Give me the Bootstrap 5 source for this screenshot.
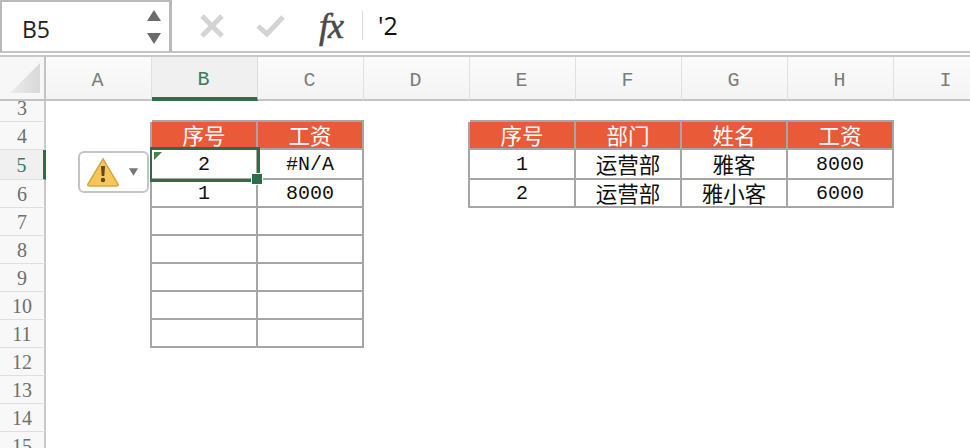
<!DOCTYPE html>
<html lang="zh">
<head>
    <meta charset="UTF-8">
    <title>工资表</title>
    <link href="https://cdn.jsdelivr.net/npm/bootstrap@5.3.0/dist/css/bootstrap.min.css" rel="stylesheet">
    <style>
        html, body { height: 448px; overflow: hidden; background: #fff; }
        .formula-bar { height: 57px; border-bottom: 2px solid #c8c8c8; }
        .formula-inner { height: 53px; border-bottom: 2px solid #c4c4c4; }
        .name-box {
            width: 172px; height: 52px; padding: 6px 0 0 20px;
            border: solid #b9b9b9; border-width: 2px 3px 2px 2px; border-bottom: 0;
            font: 23px/42px "Open Sans", "Liberation Sans", sans-serif; color: #222;
        }
        .name-arrows { width: 14px; margin-right: 8px; margin-top: 2px; gap: 11px; }
        .ico-x { margin-left: 27px; }
        .ico-ok { margin-left: 31px; }
        .fx-text { margin-left: 33px; font: italic 400 36px/1 "Liberation Serif", serif; -webkit-text-stroke: .6px #4a4a4a; color: #4a4a4a; width: 31px; letter-spacing: -1px; }
        .fx-sep { width: 1px; height: 29px; background: #ddd; margin: 0 15px 0 12px; }
        .fx-value { font: 25px/1 "Open Sans", "Liberation Sans", sans-serif; color: #111; }

        .sheet-wrap { position: relative; overflow: hidden; height: 391px; }
        .sheet { table-layout: fixed; border-collapse: separate; border-spacing: 0; width: 1000px; }
        .sheet th, .sheet td { padding: 0; text-align: center; vertical-align: middle; font-weight: 400; white-space: nowrap; }
        .sheet th { overflow: hidden; }
        .sheet .col-hd {
            height: 44px; border-bottom: 2px solid #c3c3c3; border-right: 1px solid #e0e0e0;
            background: linear-gradient(#fbfbfb, #f4f4f4);
            font: 20px "Liberation Mono", serif; color: #7c7c7c;
            padding: 4px 2px 0 0;
        }
        .sheet .col-hd.on { background: #f0f0f0; color: #3d7a58; border-bottom: 4px solid #2f6c4a; border-right-color: #dcdcdc; }
        .corner { background: #f7f7f7; border-right: 2px solid #c3c3c3; border-bottom: 2px solid #c3c3c3; }
        .sheet .row-hd {
            width: 46px; border-right: 2px solid #c9c9c9; border-bottom: 1px solid #dfdfdf;
            background: #f8f8f8; font: 20px/24px "Liberation Serif", serif; color: #6f6f6f;
        }
        .sheet .row-hd.on { background: #f0f0f0; color: #3d7a58; border-right: 3px solid #2f6c4a; }
        .r3 td, .r3 th { height: 21px; }
        .r3 .row-hd.row-hd { line-height: 14px; }
        .r3-num { display: block; height: 20px; line-height: 14px; overflow: hidden; }
        .rw td, .rw th { height: 28px; line-height: 24px; }
        .rw.r5 td, .rw.r5 th { height: 30px; }
        .xl { border-right: 2px solid #a6a6a6; border-bottom: 2px solid #a6a6a6; font: 20px "Liberation Mono", "Noto Sans CJK SC", monospace; color: #111; }
        .sheet td.xl { padding-top: 2px; }
        .sheet td.xl.cjk { padding-top: 0; }
        .sheet td.xl.hdr { background: #e95a39; color: #fff; padding-top: 0; }
        .edge-r { border-right: 2px solid #a6a6a6; }
        .edge-b { border-bottom: 2px solid #a6a6a6; }
        .cjk { font-family: "Noto Sans CJK SC", sans-serif; font-size: 21.5px; }

        .sel-box { position: absolute; left: 150px; top: 90px; width: 110px; height: 35px; border: 3px solid #2f6c4a; border-left-width: 2px; }
        .sel-handle { position: absolute; left: 251px; top: 116px; width: 12px; height: 12px; background: #2f6c4a; border: 1px solid #fff; }
        .err-mark { position: absolute; left: 154px; top: 95px; width: 0; height: 0; border-top: 8px solid #3f8a3f; border-right: 8px solid transparent; }
        .warn-btn {
            position: absolute; left: 78px; top: 94px; width: 71px; height: 42px; padding: 0 0 0 6px;
            background: #fff; border: 2px solid #c4c4c4; border-radius: 6px;
        }
    </style>
</head>
<body>

<!-- formula bar -->
<div class="formula-bar">
    <div class="formula-inner d-flex align-items-center">
        <div class="name-box d-flex justify-content-between">
            <span>B5</span>
            <div class="name-arrows d-flex flex-column">
                <svg width="14" height="12" viewBox="0 0 14 12"><path d="M7 0 14 11H0z" fill="#6b6b6b"/></svg>
                <svg width="14" height="12" viewBox="0 0 14 12"><path d="M0 0H14L7 11z" fill="#6b6b6b"/></svg>
            </div>
        </div>
        <div class="d-flex align-items-center">
            <svg class="ico-x" width="26" height="26" viewBox="0 0 26 26"><path d="M3 3 23 23M23 3 3 23" stroke="#d4d4d4" stroke-width="5" fill="none"/></svg>
            <svg class="ico-ok" width="30" height="24" viewBox="0 0 30 24"><path d="M2 12 11 20 27 3" stroke="#d4d4d4" stroke-width="5" fill="none"/></svg>
            <span class="fx-text">fx</span>
            <div class="fx-sep"></div>
            <span class="fx-value">'2</span>
        </div>
    </div>
</div>

<!-- sheet -->
<div class="sheet-wrap">
    <table class="sheet" id="sheet"></table>
    <div class="warn-btn d-flex align-items-center gap-2">
        <svg width="34" height="30" viewBox="0 0 34 30">
            <path d="M17 2 32 27Q33 29 30 29H4Q1 29 2 27z" fill="#f6c65b" stroke="#d9a441" stroke-width="1.5"/>
            <path d="M15 9h4l-.7 10h-2.6z" fill="#5c4a22"/>
            <circle cx="17" cy="23" r="2.2" fill="#5c4a22"/>
        </svg>
        <svg width="11" height="8" viewBox="0 0 12 8"><path d="M1 0H11L6 8z" fill="#767676"/></svg>
    </div>
    <div class="sel-box"></div>
    <div class="err-mark"></div>
    <div class="sel-handle"></div>
</div>

<script>
    // sheet content, keyed by row then column index (A = 0)
    const cols = ['A','B','C','D','E','F','G','H','I'];
    const cells = {
        4: {1:'序号',2:'工资',4:'序号',5:'部门',6:'姓名',7:'工资'},
        5: {1:'2',2:'#N/A',4:'1',5:'运营部',6:'雅客',7:'8000'},
        6: {1:'1',2:'8000',4:'2',5:'运营部',6:'雅小客',7:'6000'},
        7: {1:'',2:''}, 8: {1:'',2:''}, 9: {1:'',2:''}, 10: {1:'',2:''}, 11: {1:'',2:''}
    };

    let html = '<colgroup><col style="width:46px">' + cols.map(() => '<col style="width:106px">').join('') + '</colgroup>';
    html += '<tr><th class="corner"><svg class="d-block ms-auto me-1" width="30" height="30" viewBox="0 0 30 30"><defs><linearGradient id="cg" x1="0" x2="1" y1="0" y2="0"><stop offset="0" stop-color="#ececec"/><stop offset="1" stop-color="#d8d8d8"/></linearGradient></defs><path d="M30 0V30H0z" fill="url(#cg)"/></svg></th>';
    html += cols.map(c => `<th class="col-hd ${c === 'B' ? 'on' : ''}">${c}</th>`).join('') + '</tr>';

    for (let r = 3; r <= 15; r++) {
        const rowCls = r === 3 ? 'r3' : (r === 5 ? 'rw r5' : 'rw');
        const label = r === 3 ? `<span class="r3-num">${r}</span>` : r;
        html += `<tr class="${rowCls}"><th class="row-hd ${r === 5 ? 'on' : ''}">${label}</th>`;
        cols.forEach((c, i) => {
            const row = cells[r];
            // the tables' outer left and top lines sit on the neighbouring cells
            if (!row || !(i in row)) {
                const edges = [];
                if (row && (i + 1) in row) edges.push('edge-r');
                if (r === 3 && (i in cells[4])) edges.push('edge-b');
                html += `<td class="${edges.join(' ')}"></td>`;
                return;
            }
            let cls = 'xl';
            if (r === 4) cls += ' hdr';
            if (/[^\x00-\x7f]/.test(row[i])) cls += ' cjk';
            html += `<td class="${cls}">${row[i]}</td>`;
        });
        html += '</tr>';
    }
    document.getElementById('sheet').innerHTML = html;
</script>

<script src="https://cdn.jsdelivr.net/npm/bootstrap@5.3.0/dist/js/bootstrap.bundle.min.js"></script>
</body>
</html>
